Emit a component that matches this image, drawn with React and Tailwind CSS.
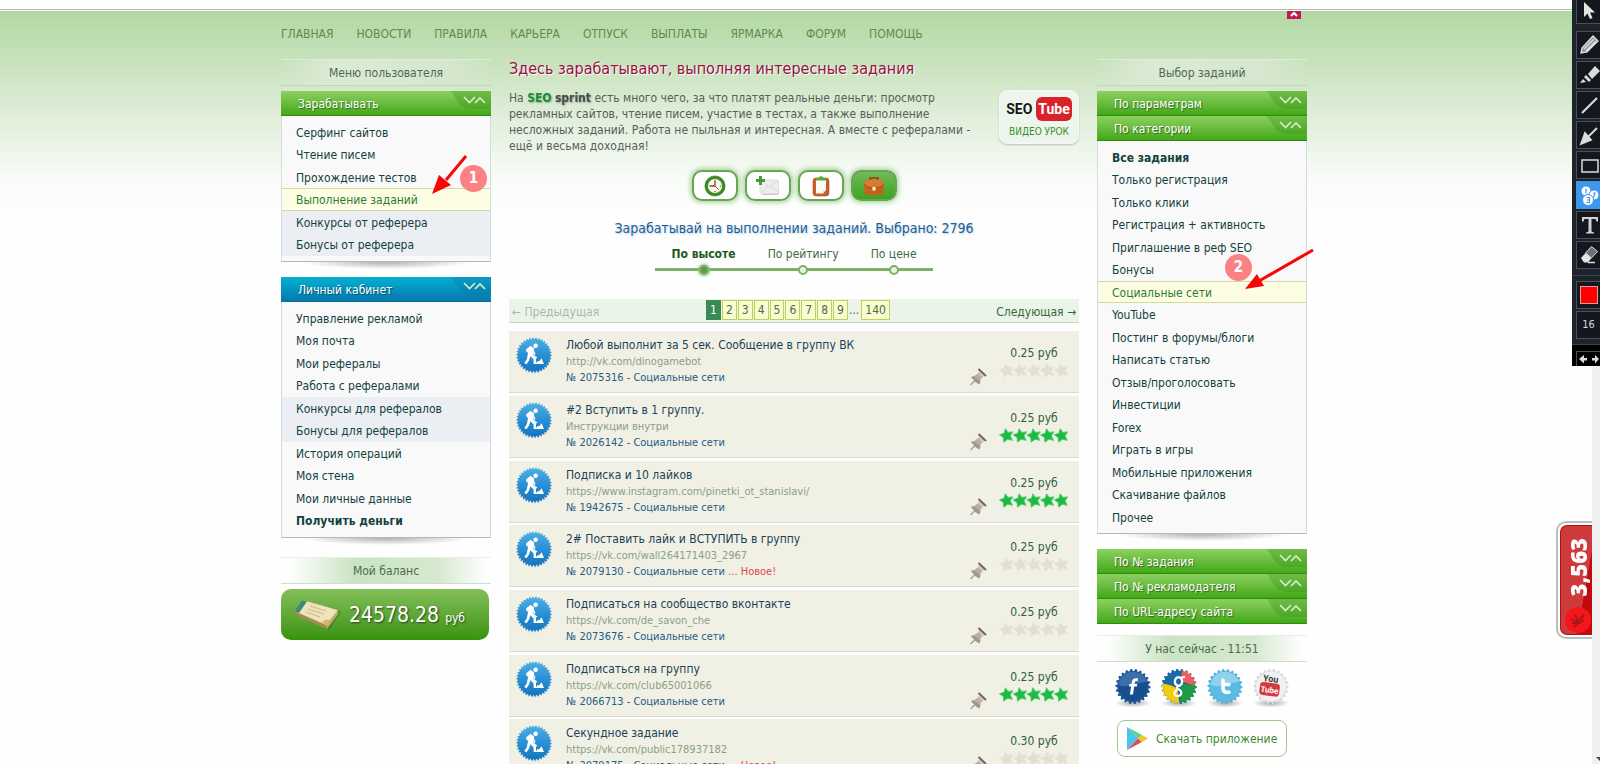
import React, { useState } from "react";

const topLinks = ["ГЛАВНАЯ", "НОВОСТИ", "ПРАВИЛА", "КАРЬЕРА", "ОТПУСК", "ВЫПЛАТЫ", "ЯРМАРКА", "ФОРУМ", "ПОМОЩЬ"];

const earnItems = [
  { label: "Серфинг сайтов" },
  { label: "Чтение писем" },
  { label: "Прохождение тестов" },
  { label: "Выполнение заданий", active: true },
  { label: "Конкурсы от реферера", tinted: true },
  { label: "Бонусы от реферера", tinted: true },
];

const cabinetItems = [
  { label: "Управление рекламой" },
  { label: "Моя почта" },
  { label: "Мои рефералы" },
  { label: "Работа с рефералами" },
  { label: "Конкурсы для рефералов", tinted: true },
  { label: "Бонусы для рефералов", tinted: true },
  { label: "История операций" },
  { label: "Моя стена" },
  { label: "Мои личные данные" },
  { label: "Получить деньги", bold: true },
];

const categoryItems = [
  { label: "Все задания", bold: true },
  { label: "Только регистрация" },
  { label: "Только клики" },
  { label: "Регистрация + активность" },
  { label: "Приглашение в реф SEO" },
  { label: "Бонусы" },
  { label: "Социальные сети", active: true },
  { label: "YouTube" },
  { label: "Постинг в форумы/блоги" },
  { label: "Написать статью" },
  { label: "Отзыв/проголосовать" },
  { label: "Инвестиции" },
  { label: "Forex" },
  { label: "Играть в игры" },
  { label: "Мобильные приложения" },
  { label: "Скачивание файлов" },
  { label: "Прочее" },
];

const tasks = [
  { id: 2075316, title: "Любой выполнит за 5 сек. Сообщение в группу ВК", note: "http://vk.com/dinogamebot", price: "0.25", rated: false },
  { id: 2026142, title: "#2 Вступить в 1 группу.", note: "Инструкции внутри", price: "0.25", rated: true },
  { id: 1942675, title: "Подписка и 10 лайков", note: "https://www.instagram.com/pinetki_ot_stanislavi/", price: "0.25", rated: true },
  { id: 2079130, title: "2# Поставить лайк и ВСТУПИТЬ в группу", note: "https://vk.com/wall264171403_2967", price: "0.25", rated: false, fresh: true },
  { id: 2073676, title: "Подписаться на сообщество вконтакте", note: "https://vk.com/de_savon_che", price: "0.25", rated: false },
  { id: 2066713, title: "Подписаться на группу", note: "https://vk.com/club65001066", price: "0.25", rated: true },
  { id: 2079175, title: "Секундное задание", note: "https://vk.com/public178937182", price: "0.30", rated: false, fresh: true },
];

// Points of a toothed circle
const gear = (cx, cy, outer, inner, teeth) => {
  const points = [];
  for (let i = 0; i < teeth * 4; i++) {
    const r = i % 4 < 2 ? outer : inner;
    const a = (i / (teeth * 4)) * Math.PI * 2;
    points.push(`${(cx + r * Math.cos(a)).toFixed(2)},${(cy + r * Math.sin(a)).toFixed(2)}`);
  }
  return points.join(" ");
};

const SectionTitle = ({ children, light = false }) => (
  <div
    className={`h-[27px] border-y text-center leading-[26px] text-[#4b6a50] ${
      light
        ? "border-t-[#dcecd6] border-b-[#c4d6b8] bg-[linear-gradient(to_right,transparent,#dbead5_25%,#d5e7ce_80%,transparent)]"
        : "border-t-[#e9efe5] border-b-[#d3dccb] bg-[linear-gradient(to_right,transparent_5%,#cae3c3_35%,#d6e9d0_75%,transparent_97%)]"
    }`}
  >
    {children}
  </div>
);

const MenuHeader = ({ children, blue = false }) => (
  <button
    type="button"
    className={`relative block h-[25px] w-full border-b pl-[17px] text-left leading-[26px] text-white [text-shadow:1px_1px_1px_rgba(0,0,0,0.45)] ${
      blue
        ? "border-b-[#0a6b9c] bg-linear-to-b from-[#06b0d2] to-[#0579ad]"
        : "border-b-[#2f8a10] bg-linear-to-b from-[#8cd05e] to-[#41a812]"
    }`}
  >
    {children}
    <svg className="absolute top-0 right-0" width="42" height="20" viewBox="0 0 42 20" fill="none">
      <path d="M2 0H42V18H22C10 18 8 8 2 0Z" fill={blue ? "#0a6f9f" : "#2f8f14"} fillOpacity="0.3" />
      <path d="M15 6L20.500 11.500L26 6" stroke="#d6eecb" strokeWidth="1.600" />
      <path d="M26 12L31 7L36 12" stroke="#d6eecb" strokeWidth="1.600" />
    </svg>
  </button>
);

const MenuList = ({ items, children }) => (
  <div className="relative border border-t-0 border-[#d3dcdf] border-b-[#b3b9bd] bg-[#f9f9f9] py-[5px]">
    <ul>
      {items.map((item) => (
        <li
          key={item.label}
          className={`h-[22px] even:h-[23px] ${
            item.active ? "border-y border-[#d3dc9c] bg-[#fdfde3]" : item.tinted ? "bg-[#ebeef3]" : ""
          }`}
        >
          <a
            href="#"
            className={`block pl-[14px] ${item.active ? "leading-[22px] text-[#2a7c38]" : "leading-6 text-[#12413f]"} ${
              item.bold ? "font-bold" : ""
            }`}
          >
            {item.label}
          </a>
        </li>
      ))}
    </ul>
    <svg className="absolute top-full left-0 w-full" height="8" viewBox="0 0 210 8" preserveAspectRatio="none">
      <defs>
        <radialGradient id="panelShadow" cx="0.5" cy="0" r="0.5" gradientTransform="translate(0 0) scale(1 2)">
          <stop offset="0" stopColor="#8b8f92" stopOpacity="0.7" />
          <stop offset="1" stopColor="#8b8f92" stopOpacity="0" />
        </radialGradient>
      </defs>
      <rect x="20" y="1" width="170" height="7" fill="url(#panelShadow)" />
    </svg>
    {children}
  </div>
);

const NumberMark = ({ children, className }) => (
  <span
    className={`absolute flex size-[27px] items-center justify-center rounded-full bg-[#fb8182] text-[15px] font-bold text-white ${className}`}
  >
    {children}
  </span>
);

const WorkerIcon = () => (
  <svg width="38" height="38" viewBox="0 0 38 38" className="shrink-0">
    <defs>
      <linearGradient id="workerBlue" x1="0" y1="0" x2="0" y2="1">
        <stop offset="0" stopColor="#4fb0e6" />
        <stop offset="0.5" stopColor="#2a90d4" />
        <stop offset="1" stopColor="#1373bd" />
      </linearGradient>
    </defs>
    <polygon points={gear(19, 20, 17.6, 16.2, 34)} fill="#9fc0d4" fillOpacity="0.6" />
    <polygon points={gear(19, 19, 17.6, 16, 34)} fill="url(#workerBlue)" />
    <circle cx="20.6" cy="9.8" r="2.300" fill="#fff" />
    <path d="M11 13.500L15.500 9.800L19.300 12.400L18 18.200L21 22V28H18.600V23.400L15.400 20.200L14 24.400L11.500 28.200L9.300 27L11.800 23.200L13.600 14.400L12.200 17Z" fill="#fff" />
    <path d="M11.500 14.500L22 22" stroke="#fff" strokeWidth="1.100" />
    <path d="M17.500 13L19.800 18.600" stroke="#fff" strokeWidth="1.600" />
    <path d="M20.500 28L22 25.500L24.500 25L26.500 22.200L29 28Z" fill="#fff" />
  </svg>
);

const PinIcon = () => (
  <svg width="18" height="18" viewBox="0 0 18 18">
    <path d="M1.500 17L6 12.500" stroke="#a59d95" strokeWidth="1.200" />
    <path d="M2 9L6 7.500L9.500 5L13.500 9L11.500 11.500L10.500 16.500L6.500 14Z" fill="#bcaea4" />
    <path d="M2 9L5 8.500L11.500 13L10.500 16.500L6.500 14Z" fill="#a4968c" />
    <path d="M9 4.500L13.500 9.500L16 7L11.500 2.500Z" fill="#d2c8c0" />
    <path d="M9.500 1L17 8" stroke="#71615a" strokeWidth="1.800" />
  </svg>
);

const Stars = ({ rated }) => (
  <svg width="70" height="15" viewBox="0 0 70 15">
    {[0, 1, 2, 3, 4].map((i) => (
      <path
        key={i}
        transform={`translate(${i * 13.7} 0)`}
        d="M6.400 0.800L9 4.400L13.900 3.900L11.200 7.800L13.400 12.300L8.600 11.200L4.800 14.200L4.400 9.600L0.500 6.800L5.200 5.200Z"
        fill={rated ? "#1fb845" : "#e2dfd2"}
        stroke={rated ? "#46d069" : "#e6e3d7"}
        strokeWidth="1"
        strokeLinejoin="round"
      />
    ))}
  </svg>
);

const ClockIcon = () => (
  <svg width="22" height="22" viewBox="0 0 22 22">
    <circle cx="11" cy="11" r="8.600" fill="#f8f8f0" stroke="#3c8c22" strokeWidth="3" />
    <circle cx="11" cy="11" r="10.100" fill="none" stroke="#2c6f18" strokeWidth="0.6" />
    <path d="M11 11V5M11 11H5.500" stroke="#7c4a35" strokeWidth="1.300" />
    <path d="M11 11L15 15" stroke="#d8422a" strokeWidth="1" />
    <path d="M11 16V17M16 11H17" stroke="#555" strokeWidth="1.200" />
  </svg>
);

const MailPlusIcon = () => (
  <svg width="24" height="22" viewBox="0 0 24 22">
    <rect x="5" y="6.500" width="18" height="13.500" rx="2" fill="#c4c7c9" />
    <rect x="4" y="5" width="18.500" height="13.500" rx="2" fill="#eceef0" stroke="#dcdfe1" />
    <path d="M5 17L12 11.500H15L22 17M10 9.500L13.500 12L22 6" stroke="#d8dbdd" fill="none" />
    <path d="M3 1H6V4H9V7H6V10H3V7H0V4H3Z" fill="#4a9a3c" />
  </svg>
);

const ClipboardIcon = () => (
  <svg width="20" height="22" viewBox="0 0 20 22">
    <rect x="2" y="3" width="16" height="18" rx="3" fill="#c9602c" stroke="#a8481c" strokeWidth="0.6" />
    <path d="M5 5H15V15L12 18.500H5Z" fill="#fbfaf6" />
    <path d="M12 18.500L12.300 15.300L15 15Z" fill="#d8d4cc" />
    <path d="M5 3.500L8 2.500C8.500 0.800 11.500 0.800 12 2.500L15 3.500V5.500H5Z" fill="#4fae38" />
  </svg>
);

const BriefcaseIcon = () => (
  <svg width="22" height="20" viewBox="0 0 22 20">
    <path d="M7 5V2H15V5" stroke="#a34a12" strokeWidth="1.800" fill="none" />
    <rect x="1.500" y="4" width="19" height="15" rx="3" fill="#c8601c" />
    <path d="M1.500 7C1.500 5 3 4 4.500 4H17.500C19 4 20.500 5 20.500 7C20.500 10 16 11.500 11 11.500S1.500 10 1.500 7Z" fill="#d87a34" />
    <path d="M1.500 8C3 11 7 12 11 12S19 11 20.500 8" stroke="#a34a12" strokeWidth="0.8" fill="none" />
    <rect x="9.500" y="11" width="3" height="3.500" fill="#fdf3e0" />
  </svg>
);

const ModeButton = ({ label, active, onClick, children }) => (
  <button
    type="button"
    aria-label={label}
    onClick={onClick}
    className={`flex h-[31px] w-[46px] items-center justify-center rounded-[10px] border-2 border-[#6aa357] shadow-[0_0_4px_2px_rgba(120,190,100,0.55)] ${
      active ? "bg-linear-to-b from-[#6fbb57] to-[#3ca31a]" : "bg-white"
    }`}
  >
    {children}
  </button>
);

const TaskRow = ({ task }) => (
  <li className="mb-[3px] flex h-[62px] border-b border-[#dadace] bg-[#f0f0e5] pt-[5px] pl-[6px] nth-[3n]:mb-[2px]">
    <WorkerIcon />
    <div className="ml-[13px] flex-1 pt-px leading-4">
      <a href="#" className="mb-px block text-[#1c4257]">{task.title}</a>
      <p className="text-[11px] leading-4 text-[#8aa184]">{task.note}</p>
      <p className="text-[11px] leading-4 text-[#1f5c86]">
        № {task.id} - Социальные сети
        {task.fresh && <span className="text-[#dd4b4b]"> ... Новое!</span>}
      </p>
    </div>
    <button type="button" aria-label="Закрепить" className="mr-3 self-end pb-[6px]">
      <PinIcon />
    </button>
    <div className="mr-[10px] flex w-[70px] flex-col items-center pt-[9px] leading-4 text-[#2e6136]">
      {task.price} руб
      <span className="pt-[2px]"><Stars rated={task.rated} /></span>
    </div>
  </li>
);

const SocialIcon = ({ label, outer, children }) => (
  <a href="#" aria-label={label} className="block">
    <svg width="38" height="40" viewBox="0 0 38 40">
      <defs>
        <radialGradient id="floorShadow">
          <stop offset="0" stopColor="#000" stopOpacity="0.35" />
          <stop offset="1" stopColor="#000" stopOpacity="0" />
        </radialGradient>
      </defs>
      <ellipse cx="19" cy="35" rx="18" ry="4.500" fill="url(#floorShadow)" />
      <polygon points={gear(19, 18.500, 17.600, 15.600, 22)} fill={outer} />
      {children}
    </svg>
  </a>
);

const SocialLinks = () => (
  <div className="mt-[6px] flex justify-center gap-2">
    <SocialIcon label="Facebook" outer="#1d5796">
      <circle cx="19" cy="18.500" r="14.600" fill="#174f8e" />
      <path d="M4.500 17A14.600 14.600 0 0 1 33 14C26 13 14 21 4.500 17Z" fill="#4a7db5" fillOpacity="0.7" />
      <path d="M24 10.500L23.600 13.200C21.600 12.800 21 13.400 20.800 14.600L20.600 16H23.300L22.800 18.500H20.200L19 26.500H15.900L17.100 18.500H15L15.400 16H17.500L17.800 14C18.200 11 20.200 9.700 24 10.500Z" fill="#fff" />
    </SocialIcon>
    <SocialIcon label="Google" outer="#2a78b8">
      <clipPath id="googleGear">
        <polygon points={gear(19, 18.500, 17.600, 15.600, 22)} />
      </clipPath>
      <g clipPath="url(#googleGear)">
        <path d="M0 0H38V38H0Z" fill="#1769a8" />
        <path d="M22 0H38V19L21 13Z" fill="#ef5c60" />
        <path d="M38 17L22 16L20 38H38Z" fill="#1d9c44" />
        <path d="M0 17C6 14 12 18 17 20L20 38H0Z" fill="#f3cc10" />
      </g>
      <ellipse cx="18.500" cy="13.500" rx="3.600" ry="4.200" fill="none" stroke="#fff" strokeWidth="2.400" />
      <path d="M21 9.500L25 9M20.500 17.500C16 19 16 20 19 21.500C22 23 22.500 27.500 18 28C13.500 28.500 13 23.500 17.500 22" stroke="#fff" strokeWidth="2" fill="none" />
    </SocialIcon>
    <SocialIcon label="Twitter" outer="#55b3dd">
      <circle cx="19" cy="18.500" r="14.600" fill="#5cbbe4" />
      <path d="M4.500 17A14.600 14.600 0 0 1 33 14C26 13 14 21 4.500 17Z" fill="#a6dcf2" fillOpacity="0.7" />
      <path d="M17 12V20C17 23 18.500 24.300 21 24.300H23M17 16.500H23" stroke="#fff" strokeWidth="3.600" strokeLinecap="round" fill="none" />
    </SocialIcon>
    <SocialIcon label="YouTube" outer="#d9dade">
      <circle cx="19" cy="18.500" r="15" fill="#f1f1f4" />
      <g transform="rotate(7 19 18)">
        <text x="18" y="14" textAnchor="middle" fontSize="9" fontWeight="700" fontFamily="Roboto, sans-serif" fill="#3a3637">You</text>
        <rect x="8" y="15" width="20" height="13" rx="3.500" fill="#d43b41" />
        <text x="18" y="25" textAnchor="middle" fontSize="8" fontWeight="700" fontFamily="Roboto, sans-serif" fill="#fff">Tube</text>
      </g>
    </SocialIcon>
  </div>
);

const LeftColumn = () => (
  <aside className="w-[210px] shrink-0">
    <SectionTitle light>Меню пользователя</SectionTitle>
    <div className="mt-[5px]">
      <MenuHeader>Зарабатывать</MenuHeader>
      <MenuList items={earnItems}>
        <svg className="absolute top-[38px] left-[148px]" width="40" height="42" viewBox="0 0 40 42">
          <path d="M36 2L16 26" stroke="#f80505" strokeWidth="3" />
          <path d="M2 40L9 21L21 31Z" fill="#f80505" />
        </svg>
        <NumberMark className="top-[49px] right-[3px]">1</NumberMark>
      </MenuList>
    </div>
    <div className="mt-[15px]">
      <MenuHeader blue>Личный кабинет</MenuHeader>
      <MenuList items={cabinetItems} />
    </div>
    <div className="mt-[19px]">
      <SectionTitle>Мой баланс</SectionTitle>
    </div>
    <div className="mt-[5px] mr-[2px] flex h-[51px] items-center rounded-[10px] bg-linear-to-b from-[#84bf58] to-[#379306] pl-3 text-white">
      <svg width="48" height="32" viewBox="0 0 48 32">
        <path d="M2 13L36 31L48 13L44 10L12 4Z" fill="#1d5a08" fillOpacity="0.35" />
        <path d="M1 12L33 26L34 30L2 16Z" fill="#a58a50" />
        <path d="M33 26L45 11V15L34 30Z" fill="#c4ab74" />
        <path d="M9 1L45 11L33 26L1 12Z" fill="#efe3be" />
        <path d="M9 1L14 2.500L6 14L1 12Z" fill="#3f8d6b" />
        <path d="M17 7L33 12M15 10L31 15M13 13L27 18" stroke="#c7b27c" strokeWidth="0.9" />
        <path d="M28 24C32 20 35 20 37 21L33 26Z" fill="#d9b56c" />
      </svg>
      <p className="ml-2 text-[21px] leading-7 [text-shadow:1px_1px_2px_rgba(0,0,0,0.6)]">
        24578.28 <span className="text-xs">руб</span>
      </p>
    </div>
  </aside>
);

const RightColumn = () => (
  <aside className="w-[210px] shrink-0">
    <SectionTitle light>Выбор заданий</SectionTitle>
    <div className="mt-[5px]">
      <MenuHeader>По параметрам</MenuHeader>
      <MenuHeader>По категории</MenuHeader>
      <MenuList items={categoryItems}>
        <NumberMark className="top-[113px] left-[127px]">2</NumberMark>
        <svg className="absolute top-[106px] left-[145px]" width="72" height="46" viewBox="0 0 72 46">
          <path d="M70 3L16 34" stroke="#f80505" strokeWidth="3" />
          <path d="M2 42L14 27L21 39Z" fill="#f80505" />
        </svg>
      </MenuList>
    </div>
    <div className="mt-[15px]">
      <MenuHeader>По № задания</MenuHeader>
      <MenuHeader>По № рекламодателя</MenuHeader>
      <MenuHeader>По URL-адресу сайта</MenuHeader>
    </div>
    <div className="mt-[11px]">
      <SectionTitle>У нас сейчас - 11:51</SectionTitle>
    </div>
    <SocialLinks />
    <a href="#" className="mx-5 mt-3 flex h-[37px] items-center rounded-lg border border-[#9ec592] bg-white pl-[9px] whitespace-nowrap text-[#3c8a30]">
      <svg className="mr-2 shrink-0" width="21" height="23" viewBox="0 0 21 23">
        <path d="M0 0V23L11 11.500Z" fill="#4cc3ea" />
        <path d="M0 0L15 8L11 11.500Z" fill="#5fd08a" />
        <path d="M0 23L15 15L11 11.500Z" fill="#e04a4f" />
        <path d="M15 8L21 11.500L15 15L11 11.500Z" fill="#f2c52d" />
      </svg>
      Скачать приложение
    </a>
  </aside>
);

const SortTabs = () => {
  const [sort, setSort] = useState("По высоте");
  return (
    <div className="mx-auto flex w-fit gap-8 bg-[linear-gradient(#7db069,#7db069)] bg-[length:100%_3px] bg-[position:0_22px] bg-no-repeat px-4">
      {["По высоте", "По рейтингу", "По цене"].map((name) => (
        <button
          key={name}
          type="button"
          onClick={() => setSort(name)}
          className={`flex flex-col items-center gap-[3px] leading-4 ${sort === name ? "font-bold text-[#1d5a22]" : "text-[#3c6b45]"}`}
        >
          {name}
          <span className={`size-[10px] rounded-full border-2 border-[#7db069] ${sort === name ? "bg-[#5f9a4a] shadow-[0_0_3px_1px_#8fc27e]" : "bg-[#e6f3df]"}`} />
        </button>
      ))}
    </div>
  );
};

const Pagination = () => (
  <nav className="mt-[24px] flex h-[24px] items-start justify-between border-b border-[#c5d3bf] bg-[#ebf4e8] px-[3px]">
    <span className="w-[104px] leading-[26px] whitespace-nowrap text-[#a7bca5]">← Предыдущая</span>
    <div className="flex items-center pt-px text-[#4c7238]">
      <span className="mr-px h-[20px] border border-[#3a8a55] bg-[#3a8a55] px-[3px] leading-[19px] text-white">1</span>
      {["2", "3", "4", "5", "6", "7", "8", "9"].map((page) => (
        <a key={page} href="#" className="mr-px h-[20px] border border-[#c3d24e] bg-[#f8fbd3] px-[3px] leading-[19px]">
          {page}
        </a>
      ))}
      ...
      <a href="#" className="ml-[2px] h-[20px] border border-[#c3d24e] bg-[#f8fbd3] px-[3px] leading-[19px]">140</a>
    </div>
    <a href="#" className="w-[96px] text-right leading-[26px] whitespace-nowrap text-[#35683a]">Следующая →</a>
  </nav>
);

const MainColumn = () => {
  const [mode, setMode] = useState("tasks");
  return (
    <main className="min-w-0 flex-1">
      <h1 className="text-[16px] leading-5 text-[#9b1040] [text-shadow:1px_1px_1px_#fff]">
        Здесь зарабатывают, выполняя интересные задания
      </h1>
      <div className="mt-[11px] flex items-start justify-between">
        <p className="w-[480px] leading-4 text-[#55605a]">
          На <b className="text-[#138f3c] [text-shadow:1px_1px_2px_#8fae8b]">SEO</b>{" "}
          <b className="text-[#444d47] [text-shadow:1px_1px_2px_#9aa89a]">sprint</b> есть много чего, за что платят реальные деньги: просмотр
          рекламных сайтов, чтение писем, участие в тестах, а также выполнение несложных заданий. Работа не пыльная и
          интересная. А вместе с рефералами - ещё и весьма доходная!
        </p>
        <a href="#" className="flex h-[54px] w-[80px] flex-col items-center rounded-lg border border-[#f4f9f2] bg-[#eef5ec] pt-[6px] shadow-[0_1px_2px_rgba(0,0,0,0.2)]">
          <span className="flex items-center gap-1 font-['Roboto',sans-serif] text-[14px] leading-6 font-bold text-[#161616]">
            SEO
            <span className="rounded-md bg-[#d8232a] px-[2px] text-white">Tube</span>
          </span>
          <span className="mt-[3px] text-[10px] leading-4 text-[#34922b]">ВИДЕО УРОК</span>
        </a>
      </div>
      <div className="mt-4 flex justify-center gap-[7px]">
        <ModeButton label="Серфинг" active={mode === "surf"} onClick={() => setMode("surf")}><ClockIcon /></ModeButton>
        <ModeButton label="Письма" active={mode === "mail"} onClick={() => setMode("mail")}><MailPlusIcon /></ModeButton>
        <ModeButton label="Тесты" active={mode === "tests"} onClick={() => setMode("tests")}><ClipboardIcon /></ModeButton>
        <ModeButton label="Задания" active={mode === "tasks"} onClick={() => setMode("tasks")}><BriefcaseIcon /></ModeButton>
      </div>
      <h2 className="mt-[17px] mb-[8px] text-center text-[14px] leading-5 text-[#235f96] [text-shadow:1px_1px_2px_#b5cfe6]">
        Зарабатывай на выполнении заданий. Выбрано: 2796
      </h2>
      <SortTabs />
      <Pagination />
      <ul className="mt-2">
        {tasks.map((task) => (
          <TaskRow key={task.id} task={task} />
        ))}
      </ul>
    </main>
  );
};

const tools = [
  { name: "Карандаш", art: <path d="M5 21L6 16L17 4L22 9L11 20Z M8 17L18 7 M10 19L20 9" fill="#8a8f94" stroke="#e4e4e4" strokeWidth="1.300" /> },
  { name: "Маркер", art: <path d="M12 12L19 4L24 9L16 17Z M8 15L10 13L15 18L13 20Z M4 21L7 17L10 20Z" fill="#dcdcdc" /> },
  { name: "Линия", art: <path d="M6 21L21 6" stroke="#dcdcdc" strokeWidth="2.200" /> },
  { name: "Стрелка", art: <path d="M21 6L12 15M5 22L9 11L15 18Z" stroke="#dcdcdc" strokeWidth="1.800" fill="#dcdcdc" /> },
  { name: "Рамка", art: <rect x="6" y="8" width="16" height="12" fill="none" stroke="#dcdcdc" strokeWidth="1.500" /> },
  {
    name: "Номера",
    active: true,
    art: (
      <g fill="#fff" stroke="#3d97ee" strokeWidth="1">
        <circle cx="10" cy="9" r="5" />
        <circle cx="18" cy="13" r="5" />
        <circle cx="12" cy="18" r="5.500" />
        <path d="M10 6.500V11.500M17 11H19L17.500 15.500M10.500 15.500H13.500V20.500H10.500M11 18H13" strokeWidth="1.200" fill="none" />
      </g>
    ),
  },
  { name: "Текст", art: <path d="M6 5H22V9.500H20.500L19.500 7H15.500V19.500L18 20.500V21.500H10V20.500L12.500 19.500V7H8.500L7.500 9.500H6Z" fill="#d2d2d2" /> },
  {
    name: "Ластик",
    art: (
      <g>
        <path d="M5 16L9.500 11L15.500 16L12 20.500H8Z" fill="#e4e4e4" />
        <path d="M9.500 11L15.500 4.500L21.500 9.500L15.500 16Z" fill="#6d7175" stroke="#dcdcdc" strokeWidth="1" />
        <path d="M12 20.500H19" stroke="#dcdcdc" strokeWidth="1.500" />
      </g>
    ),
  },
];

const ToolPalette = () => (
  <div className="fixed top-0 right-0 flex h-[366px] w-[28px] flex-col items-end gap-[2px] overflow-hidden bg-[#1d242c]">
    <button type="button" aria-label="Курсор" className="h-[24px] w-[24px] shrink-0 border border-t-0 border-r-0 border-[#4a5057] bg-[#14181e]">
      <svg width="24" height="23" viewBox="0 0 24 23">
        <path d="M7 2V17L10.500 13.500L13 19L15.500 18L13 12.500H18Z" fill="#e4e4e4" />
      </svg>
    </button>
    <div className="mt-[5px] flex flex-col gap-[2px]">
      {tools.map((tool) => (
        <button
          key={tool.name}
          type="button"
          aria-label={tool.name}
          className={`h-[28px] w-[24px] overflow-hidden border border-r-0 ${tool.active ? "border-[#3d97ee] bg-[#3d97ee]" : "border-[#4a5057] bg-[#14181e]"}`}
        >
          <svg width="26" height="26" viewBox="1 0 26 26">{tool.art}</svg>
        </button>
      ))}
    </div>
    <div className="mt-[4px] w-full border-t border-[#3a4148]" />
    <button type="button" aria-label="Цвет" className="mt-[3px] flex h-[28px] w-[24px] shrink-0 items-center justify-center border border-r-0 border-[#4a5057] bg-[#14181e]">
      <span className="size-[18px] border border-[#d9a0a0] bg-[#ff0000]" />
    </button>
    <button type="button" className="h-[28px] w-[24px] shrink-0 border border-r-0 border-[#4a5057] bg-[#14181e] text-center text-[11px] text-[#d8d8d8]">
      16
    </button>
    <div className="mt-[3px] flex w-full flex-1 items-end justify-end border-t border-[#3a4148] bg-black">
      <button type="button" aria-label="Отмена и повтор" className="h-[15px] w-[24px] border border-r-0 border-b-0 border-[#4a5057]">
        <svg width="22" height="14" viewBox="0 0 22 14">
          <path d="M2 7L7 3V6H10V8.500H7V11.500Z M22 7L18 3V6H15V8.500H18V11.500Z" fill="#dcdcdc" />
        </svg>
      </button>
    </div>
  </div>
);

const LiveCounter = () => (
  <div className="fixed top-[521px] right-[8px] h-[118px] w-[36px] rounded-l-[10px] border-2 border-r-0 border-[#bdbdbd] bg-white py-[2px] pl-[2px]">
    <div className="flex h-full w-full flex-col items-center justify-between rounded-l-[7px] border border-r-0 border-[#a81414] bg-[linear-gradient(100deg,#cf3b3d_70%,#c00a0d_71%)] pt-[12px] pl-[2px]">
      <span className="rotate-180 font-['Open_Sans',sans-serif] text-[22px] leading-6 font-extrabold text-white [writing-mode:vertical-rl]">3,563</span>
      <svg width="30" height="28" viewBox="0 0 30 28">
        <circle cx="15" cy="14" r="13" fill="#f4161b" />
        <path d="M8 13L14 16L21 9M9 17L16 17L21 14M12 8L15 17L11 21" stroke="#a81616" strokeWidth="1.800" fill="none" />
      </svg>
    </div>
  </div>
);

const App = () => (
  <div className="flex h-screen overflow-hidden bg-[#fdfefd] font-['DejaVu_Sans_Condensed','Noto_Sans',sans-serif] text-xs">
    <div className="flex-1 pt-[9px]">
      <div className="border-t border-[#a9bfa4] pt-px">
        <div className="bg-[linear-gradient(to_bottom,#b2d8a2,#c8e2bd_50px,#e2efdc_110px,#f8fbf7_165px,#fdfefd_200px)] pr-1">
          <div className="mx-auto w-[1026px]">
            <div className="relative">
              <nav className="flex gap-[23px] pt-[13px] leading-5 text-[#5f8a4b]">
                {topLinks.map((link) => (
                  <a key={link} href="#">{link}</a>
                ))}
              </nav>
              <button type="button" aria-label="Закрыть" className="absolute top-0 right-[6px] h-2 w-[14px] bg-[#c31a55]">
                <svg width="14" height="8" viewBox="0 0 14 8">
                  <path d="M4 5L7 2L10 5" stroke="#fff" strokeWidth="2" fill="none" />
                </svg>
              </button>
            </div>
            <div className="mt-[15px] flex gap-[18px]">
              <LeftColumn />
              <MainColumn />
              <RightColumn />
            </div>
          </div>
        </div>
      </div>
    </div>
    <div className="flex w-2 items-end bg-[#f0f0f0]">
      <svg width="8" height="10" viewBox="0 0 8 10">
        <path d="M4 3H8V7Z" fill="#444" />
      </svg>
    </div>
    <LiveCounter />
    <ToolPalette />
  </div>
);

export default App;
